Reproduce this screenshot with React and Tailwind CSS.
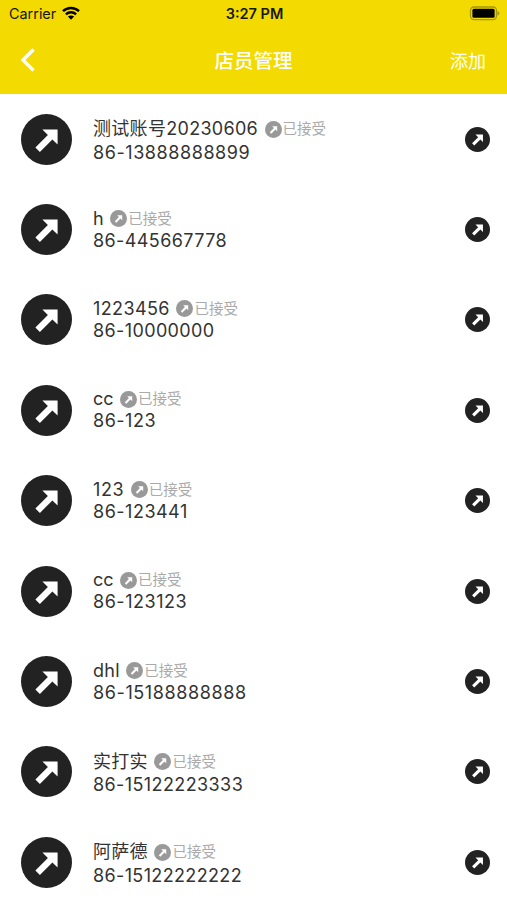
import React from 'react'
import clsx from 'clsx'

const clerks = [
  {
    name: '测试账号20230606',
    phone: '86-13888888899',
    cjk: true,
    nameClass: 'tracking-[0.3px]',
    phoneClass: 'tracking-[0.57px]',
  },
  { name: 'h', phone: '86-445667778', phoneClass: 'tracking-[0.4px]' },
  {
    name: '1223456',
    phone: '86-10000000',
    nameClass: 'tracking-[0.4px]',
    phoneClass: 'tracking-[0.38px]',
  },
  { name: 'cc', phone: '86-123', phoneClass: 'tracking-[0.5px]' },
  {
    name: '123',
    phone: '86-123441',
    nameClass: 'tracking-[0.6px]',
    phoneClass: 'tracking-[0.5px]',
  },
  { name: 'cc', phone: '86-123123', phoneClass: 'tracking-[0.53px]' },
  {
    name: 'dhl',
    phone: '86-15188888888',
    nameClass: 'tracking-[0.25px]',
    phoneClass: 'tracking-[0.6px]',
  },
  {
    name: '实打实',
    phone: '86-15122223333',
    cjk: true,
    nameClass: 'tracking-[0.3px]',
    phoneClass: 'tracking-[0.4px]',
  },
  {
    name: '阿萨德',
    phone: '86-15122222222',
    cjk: true,
    nameClass: 'tracking-[0.3px]',
    phoneClass: 'tracking-[0.36px]',
  },
]

const ArrowIcon = ({ className }) => (
  <svg className={className} viewBox="0 0 51 51" aria-hidden="true">
    <circle cx="25.5" cy="25.5" r="25.5" fill="currentColor" />
    <path
      d="M21.4 15.4H36.6V30.6L31.4 25.4L18.9 37.9L14.4 33.4L26.9 20.9Z"
      fill="white"
    />
  </svg>
)

const StatusBar = () => (
  <div className="grid grid-cols-3 items-center h-[27px] pl-[9px] pr-[7px] text-[#17170a]">
    <div className="flex items-center gap-[6px] text-[14.4px]">
      Carrier
      <svg className="w-[18px] h-[14px] -mt-px" viewBox="0 0 18 14" fill="none">
        <path
          d="M1 5.2C5.5 .9 12.5 .9 17 5.2M3.9 8.3C6.8 5.6 11.2 5.6 14.1 8.3"
          stroke="black"
          strokeWidth="2.5"
        />
        <path d="M5.9 10.5C7.7 9 10.3 9 12.1 10.5L9 13.7Z" fill="black" />
      </svg>
    </div>
    <div className="text-center text-[14.5px] font-semibold">3:27 PM</div>
    <svg className="justify-self-end w-[31px] h-[15px]" viewBox="0 0 31 15">
      <rect
        x="1.5"
        y="1"
        width="26"
        height="12.6"
        rx="3.5"
        fill="none"
        stroke="#a49708"
        strokeWidth="1.3"
      />
      <rect x="3.4" y="2.8" width="22.2" height="9" rx="1.5" fill="black" />
      <path d="M28.5 5V9.6C31 8.7 31 5.9 28.5 5Z" fill="#a49708" />
    </svg>
  </div>
)

const Header = () => (
  <header className="h-[94px] bg-[#f3da00]">
    <StatusBar />
    <div className="grid grid-cols-3 items-center h-[67px] pl-5 pr-[21px] text-white">
      <button type="button" aria-label="返回">
        <svg className="w-4 h-6 -mt-[2px]" viewBox="0 0 16 24" fill="none">
          <path d="M13.5 1.5L3 12L13.5 22.5" stroke="white" strokeWidth="3.4" />
        </svg>
      </button>
      <h1 className="pt-[2px] pl-px text-center text-[19.5px] font-medium">
        店员管理
      </h1>
      <button type="button" className="pt-px text-right text-[18px]">
        添加
      </button>
    </div>
  </header>
)

const ClerkRow = ({ name, phone, cjk, nameClass, phoneClass }) => (
  <li className="flex items-center h-[90.4px] pl-[21px] pr-[17px]">
    <ArrowIcon className="size-[51px] shrink-0 text-[#222222]" />
    <div
      className={clsx(
        'flex-1 ml-[21px] text-[18px] text-[#333333]',
        cjk && 'pt-[2px]'
      )}>
      <div className={clsx('flex items-center', cjk ? 'h-[25px]' : 'h-[22px]')}>
        <span className={clsx('leading-[22px]', nameClass)}>{name}</span>
        <ArrowIcon className="size-[17px] ml-[6.5px] shrink-0 text-[#999999]" />
        <span className="ml-[1px] text-[14.5px] leading-[22px] text-[#aaaaaa]">
          已接受
        </span>
      </div>
      <div className={clsx('leading-[22px]', phoneClass)}>{phone}</div>
    </div>
    <ArrowIcon className="size-[25px] shrink-0 text-[#222222]" />
  </li>
)

const App = () => (
  <div className="h-[900px] overflow-hidden bg-white font-['Inter','Noto_Sans_CJK_SC',sans-serif]">
    <Header />
    <ul>
      {clerks.map((clerk, index) => (
        <ClerkRow key={index} {...clerk} />
      ))}
    </ul>
  </div>
)

export default App
